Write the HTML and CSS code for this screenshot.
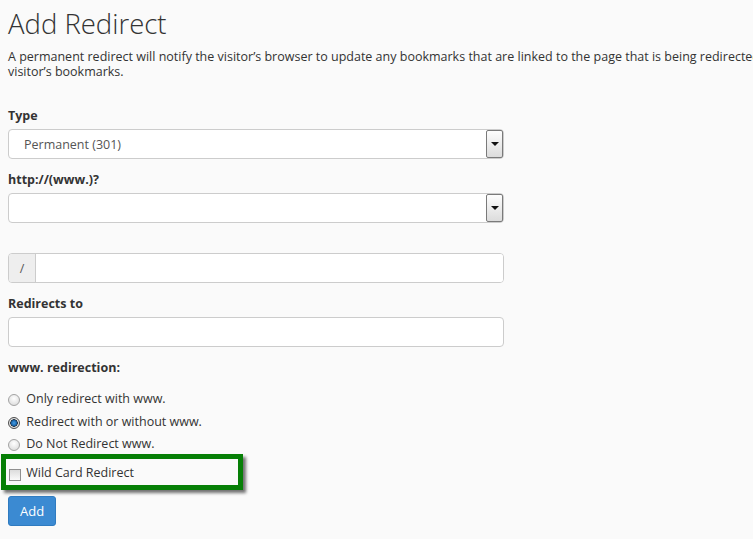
FILE: index.html
```html
<!DOCTYPE html>
<html lang="en">
<head>
  <meta charset="UTF-8">
  <title>Add Redirect</title>
  <meta name="viewport" content="width=device-width, initial-scale=1.0">
  <link rel="stylesheet" href="styles.css">
</head>
<body>
  <div class="page">
    <h1>Add Redirect</h1>
    <p class="intro">A permanent redirect will notify the visitor’s browser to update any bookmarks that are linked to the page that is being redirected. A temporary redirect will not update the visitor’s bookmarks.</p>

    <form class="redirect-form" onsubmit="return false">
      <div class="form-group">
        <label for="type">Type</label>
        <div class="select-wrap">
          <select id="type">
            <option>Permanent (301)</option>
            <option>Temporary (302)</option>
          </select>
          <span class="select-arrow"></span>
        </div>
      </div>

      <div class="form-group">
        <label for="domain">http://(www.)?</label>
        <div class="select-wrap">
          <select id="domain">
            <option></option>
          </select>
          <span class="select-arrow"></span>
        </div>
      </div>

      <div class="form-group spaced">
        <div class="input-group">
          <span class="addon">/</span>
          <input type="text" id="path">
        </div>
      </div>

      <div class="form-group">
        <label for="target">Redirects to</label>
        <input type="text" id="target" class="text-input">
      </div>

      <div class="form-group last">
        <label>www. redirection:</label>
        <div class="radio-list">
          <label class="radio"><input type="radio" name="www"> Only redirect with www.</label>
          <label class="radio"><input type="radio" name="www" checked> Redirect with or without www.</label>
          <label class="radio"><input type="radio" name="www"> Do Not Redirect www.</label>
        </div>
      </div>

      <div class="wildcard">
        <label class="check"><input type="checkbox"> Wild Card Redirect</label>
      </div>

      <button class="btn-primary">Add</button>
    </form>
  </div>
</body>
</html>
```

FILE: styles.css
```css
html, body {
  overflow: hidden;
}
body {
  font-family: "Open Sans", Arial, sans-serif;
  font-size: 12.5px;
  color: #333;
  background: #fafafa;
  margin: 0;
  padding: 0 8px;
}
.page {
  width: 1015px;
}
h1 {
  font-size: 27.5px;
  font-weight: 300;
  line-height: 1.1;
  margin: 9px 0 11px;
}
.intro {
  line-height: 1.15;
  margin: 0 0 28px;
}
.redirect-form {
  width: 496px;
}
.form-group {
  margin-bottom: 12px;
}
.form-group.spaced {
  padding-top: 18px;
}
.form-group.last {
  margin-bottom: 0;
}
.form-group > label {
  display: block;
  font-weight: 700;
  line-height: 18px;
  margin-bottom: 4px;
}
.select-wrap {
  position: relative;
}
select, .text-input, .input-group {
  display: block;
  box-sizing: border-box;
  width: 100%;
  height: 30px;
  border: 1px solid #ccc;
  border-radius: 4px;
  background: #fff;
  font-family: inherit;
  font-size: 12.5px;
  color: #555;
}
select {
  appearance: none;
  -webkit-appearance: none;
  padding: 0 24px 0 15px;
}
.select-arrow {
  position: absolute;
  top: 1px;
  right: 1px;
  width: 15px;
  height: 26px;
  border: 1px solid #7a7a7a;
  border-radius: 2px;
  background: linear-gradient(#fdfdfd, #dcdcdc);
  pointer-events: none;
}
.select-arrow::after {
  content: "";
  position: absolute;
  left: 4px;
  top: 11px;
  border-left: 4px solid transparent;
  border-right: 4px solid transparent;
  border-top: 4px solid #111;
}
.text-input {
  padding: 0 10px;
}
.input-group {
  display: flex;
  overflow: hidden;
}
.addon {
  width: 26px;
  background: #eee;
  border-right: 1px solid #ccc;
  display: flex;
  align-items: center;
  justify-content: center;
  color: #555;
}
.input-group input {
  flex: 1;
  border: none;
  outline: none;
  font-family: inherit;
  font-size: 12.5px;
  padding: 0 10px;
}
.radio-list {
  padding-top: 7px;
}
.radio {
  display: block;
  line-height: 22.5px;
}
.radio input {
  appearance: none;
  -webkit-appearance: none;
  width: 12px;
  height: 12px;
  margin: 0 3px 0 0;
  vertical-align: -3px;
  border: 1px solid #a3a3a3;
  border-radius: 50%;
  background: radial-gradient(circle at 50% 35%, #fff, #d6d6d6);
}
.radio input:checked {
  border-color: #4d4d4d;
  background: radial-gradient(circle, #4aa0e6 0, #1c69b0 2.5px, #1f3244 3.5px, #e6e6e6 4px, #cfcfcf 6px);
}
.wildcard {
  width: 229px;
  margin-top: -2px;
  margin-left: -7px;
  padding: 5px 0 3px 3px;
  border: 5px solid #067f06;
  box-shadow: 3px 3px 3px rgba(0, 0, 0, 0.55);
  line-height: 18px;
}
.check input {
  appearance: none;
  -webkit-appearance: none;
  width: 12px;
  height: 12px;
  margin: 0 2px 0 0;
  vertical-align: -4px;
  border: 1px solid #8f8f8f;
  background: linear-gradient(#dcdcdc, #fafafa);
}
.btn-primary {
  margin-top: 6px;
  height: 30px;
  padding: 0 11px;
  background: #3b8ad2;
  color: #fff;
  border: 1px solid #2f7bc0;
  border-radius: 3px;
  font-family: inherit;
  font-size: 13px;
  cursor: pointer;
}
```
